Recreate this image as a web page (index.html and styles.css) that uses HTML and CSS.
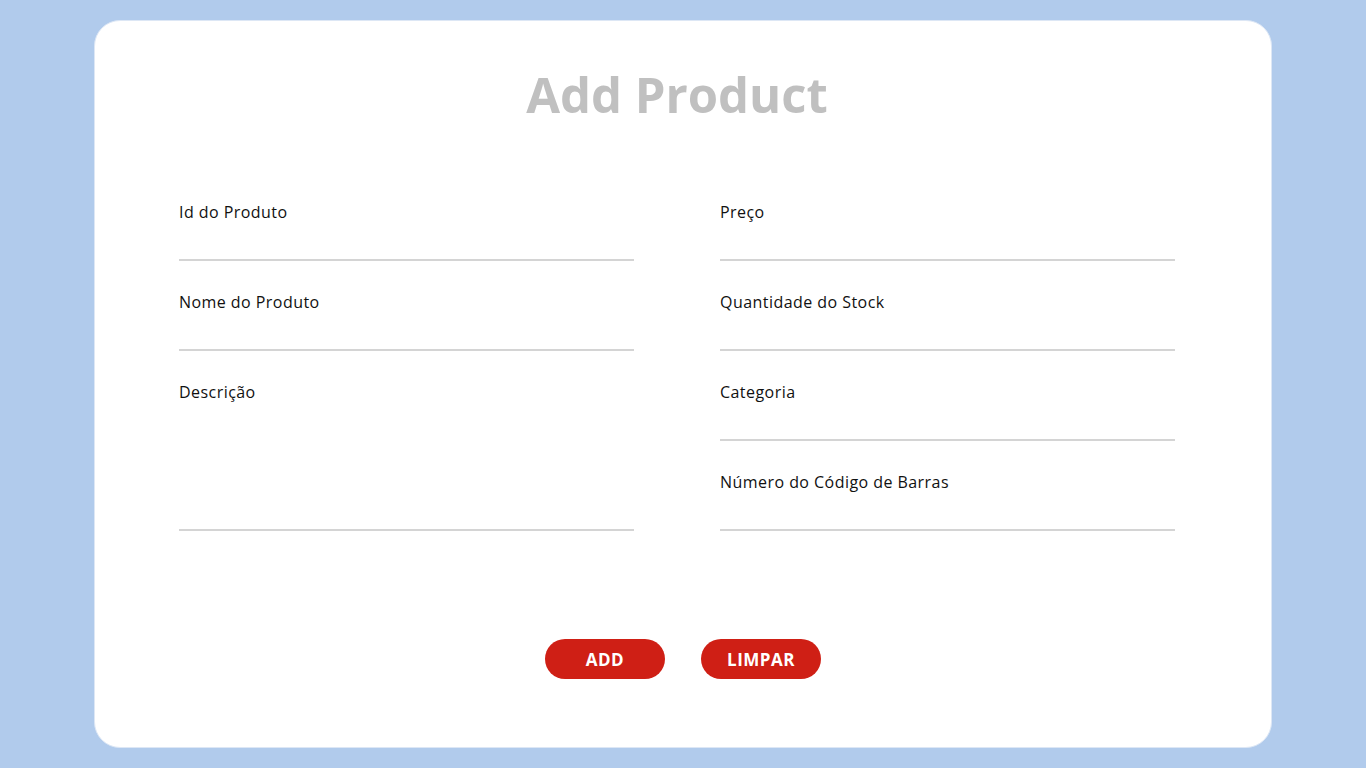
FILE: index.html
```html
<!DOCTYPE html>
<html lang="pt">
<head>
<meta charset="utf-8">
<title>Add Product</title>
<link rel="stylesheet" href="styles.css">
</head>
<body>
<div class="card">
  <div class="form-body">
    <h1 class="title">Add Product</h1>
    <div class="grid">
      <div class="field">
        <label class="label">Id do Produto</label>
        <input class="input" type="text">
      </div>
      <div class="field">
        <label class="label">Preço</label>
        <input class="input" type="text">
      </div>
      <div class="field">
        <label class="label">Nome do Produto</label>
        <input class="input" type="text">
      </div>
      <div class="field">
        <label class="label">Quantidade do Stock</label>
        <input class="input" type="text">
      </div>
      <div class="field field-tall">
        <label class="label">Descrição</label>
        <textarea class="input textarea"></textarea>
      </div>
      <div class="field">
        <label class="label">Categoria</label>
        <input class="input" type="text">
      </div>
      <div class="field">
        <label class="label">Número do Código de Barras</label>
        <input class="input" type="text">
      </div>
    </div>
  </div>
  <div class="actions">
    <button class="btn">ADD</button>
    <button class="btn">LIMPAR</button>
  </div>
</div>
</body>
</html>
```
FILE: styles.css
```css
html, body {
  margin: 0;
  padding: 0;
}
body {
  background: #b1cbec;
  font-family: "Open Sans", "DejaVu Sans", sans-serif;
  padding: 20px 0;
  height: 768px;
  box-sizing: border-box;
}
.card {
  width: 1178px;
  height: 728px;
  margin: 0 auto;
  background: #ffffff;
  border: 1px solid #dde7f5;
  border-radius: 26px;
  box-sizing: border-box;
  padding-top: 43px;
}
.form-body {
  margin-left: 84px;
  width: 996px;
}
.title {
  margin: 0;
  text-align: center;
  font-size: 49px;
  line-height: 60px;
  font-weight: 700;
  color: #c0c0c0;
}
.grid {
  margin-top: 76px;
  display: grid;
  grid-template-columns: 455px 455px;
  column-gap: 86px;
  row-gap: 29px;
}
.field {
  display: flex;
  flex-direction: column;
}
.field-tall {
  grid-row: span 2;
}
.label {
  font-size: 16px;
  line-height: 24px;
  letter-spacing: 0.45px;
  color: #111;
}
.input {
  height: 35px;
  border: none;
  border-bottom: 2px solid #d4d4d4;
  outline: none;
  padding: 0;
  margin: 0;
  font: inherit;
  background: transparent;
}
.textarea {
  flex: 1;
  resize: none;
}
.actions {
  margin-top: 108px;
  display: flex;
  justify-content: center;
  gap: 36px;
}
.btn {
  width: 120px;
  height: 40px;
  border: none;
  border-radius: 20px;
  background: #cf1f15;
  color: #fff;
  font-family: "Open Sans", sans-serif;
  font-weight: 700;
  font-size: 17px;
  letter-spacing: 0.5px;
  padding: 0;
}
```
